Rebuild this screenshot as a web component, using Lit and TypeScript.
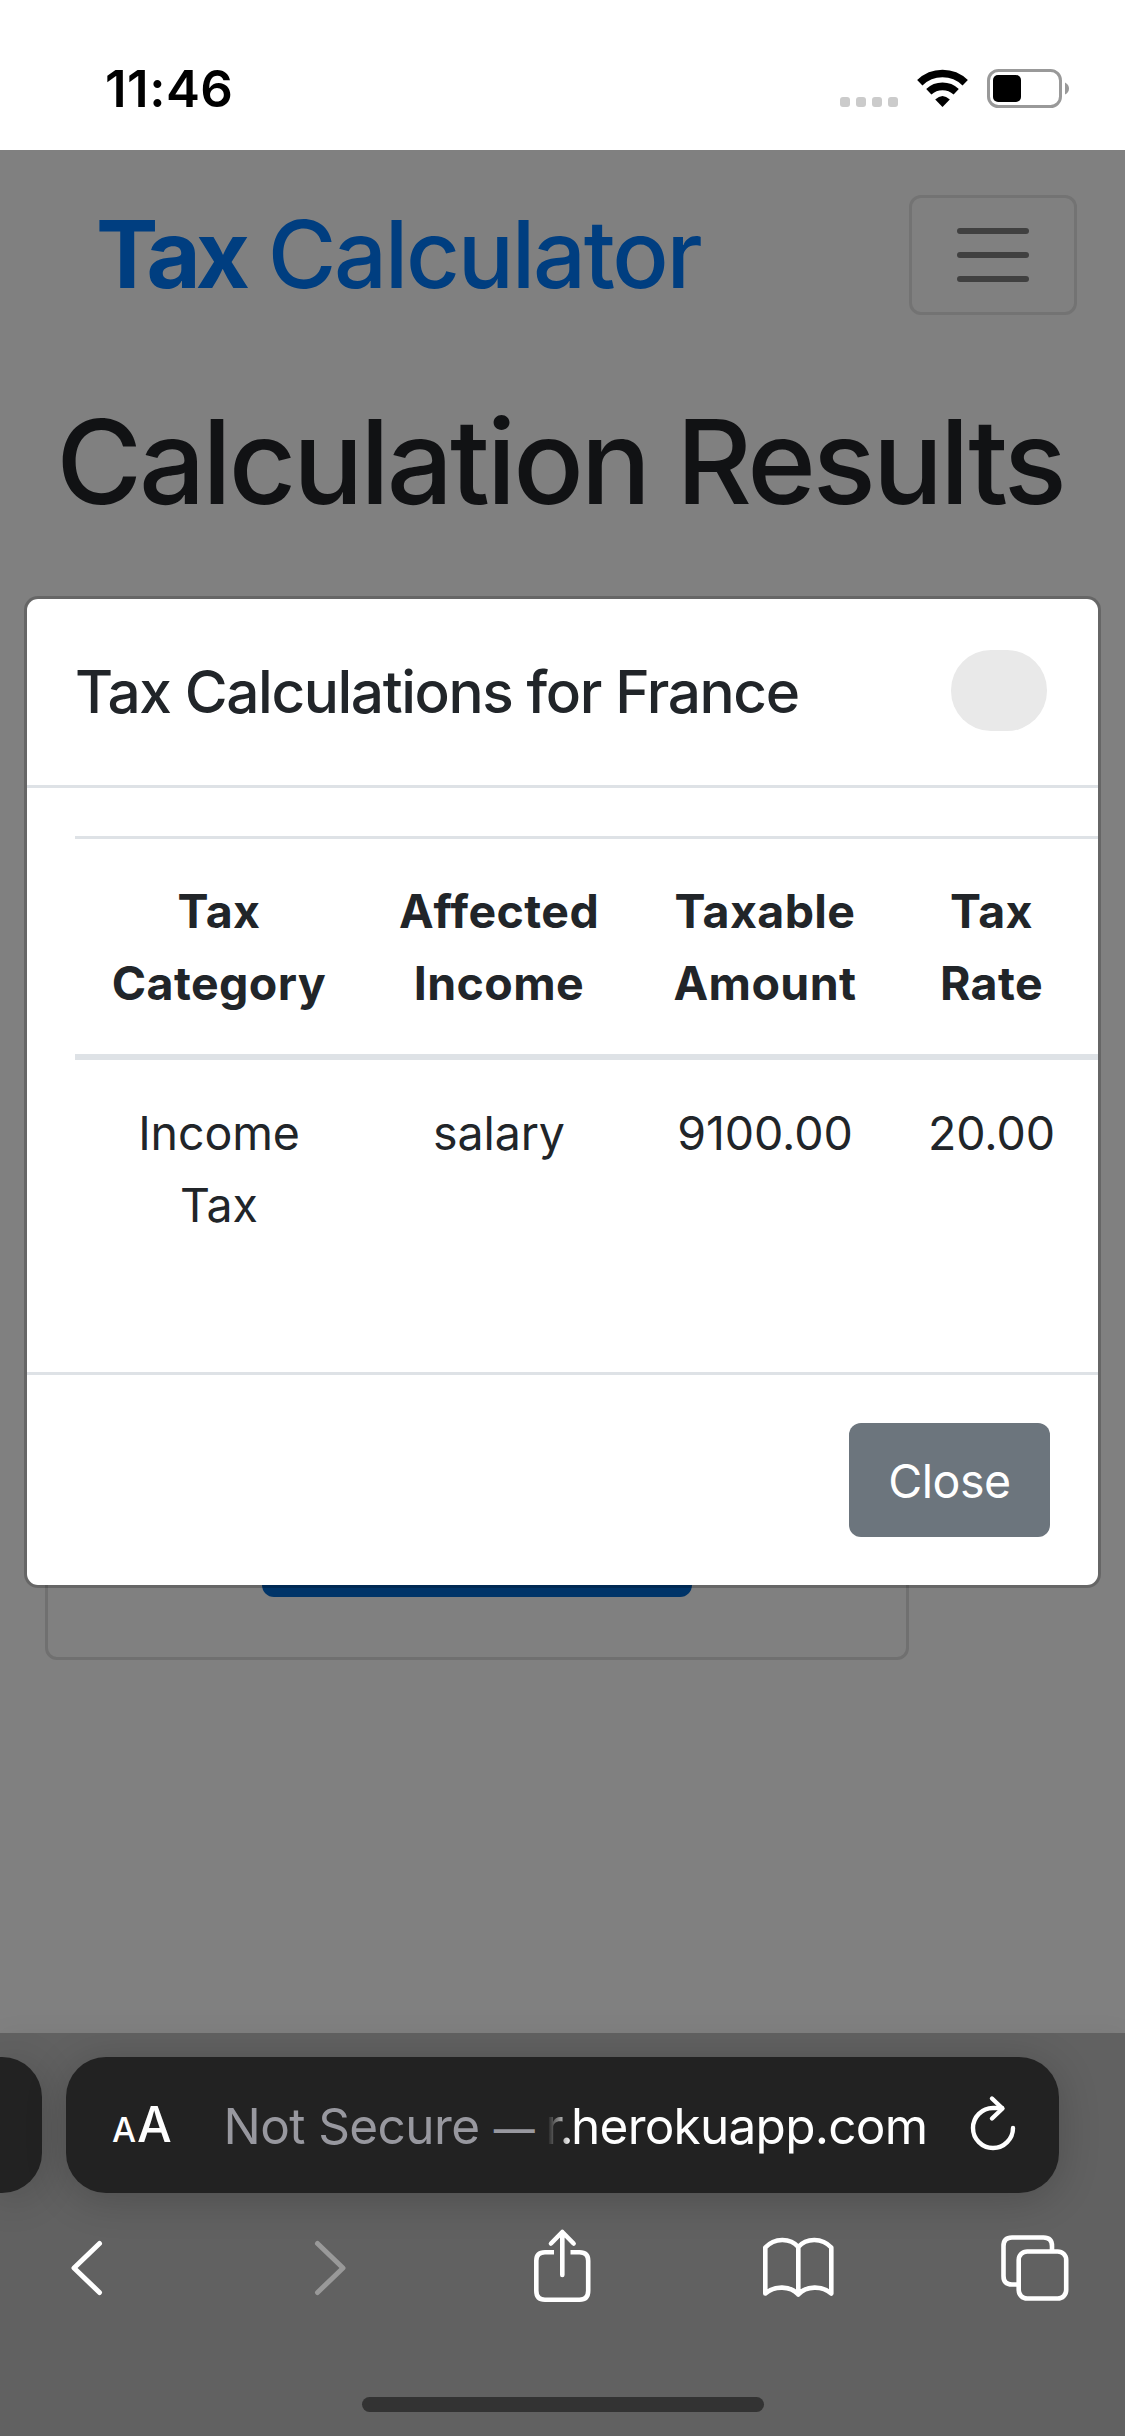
import { LitElement, html, css, svg } from "lit";
import { customElement } from "lit/decorators.js";

interface Column {
  heading: string[];
  value: string[];
}

const COLUMNS: Column[] = [
  { heading: ["Tax", "Category"], value: ["Income", "Tax"] },
  { heading: ["Affected", "Income"], value: ["salary"] },
  { heading: ["Taxable", "Amount"], value: ["9100.00"] },
  { heading: ["Tax", "Rate"], value: ["20.00"] },
];

const lines = (parts: string[]) => parts.map((p) => html`<span class="line">${p}</span>`);

@customElement("status-bar")
export class StatusBar extends LitElement {
  static styles = css`
    :host { display: flex; justify-content: space-between; height: 150px; box-sizing: border-box; background: #fff; color: #000; padding: 0 54px 0 105px; }
    .time { font-size: 51px; font-weight: 600; line-height: 60px; margin-top: 59px; letter-spacing: 0.5px; }
    .icons { display: block; width: 240px; height: 60px; margin-top: 60px; }
  `;
  render() {
    return html`
      <div class="time">11:46</div>
      <svg class="icons" viewBox="831 60 240 60">
        ${[840, 856, 872, 888].map((x) => svg`<rect x=${x} y="97" width="10" height="10" rx="3" fill="#cbcbcb"/>`)}
        <g fill="none" stroke="#000" stroke-width="7.6">
          <path d="M919.8 82.8a32.5 32.5 0 0 1 45.4 0"/>
          <path d="M928.8 91.8a20 20 0 0 1 27.4 0"/>
        </g>
        <path d="M935.2 99.6q7.3-7.2 14.6 0l-7.3 7.5z" fill="#000"/>
        <rect x="988.5" y="70.5" width="72" height="36" rx="10" fill="none" stroke="#999" stroke-width="3"/>
        <rect x="993" y="75" width="28" height="27" rx="5" fill="#000"/>
        <path d="M1065 82.5q4 2 4 6t-4 6z" fill="#999"/>
      </svg>
    `;
  }
}

@customElement("result-dialog")
export class ResultDialog extends LitElement {
  static styles = css`
    :host { display: block; box-sizing: border-box; width: 1077px; height: 992px; border: 3px solid rgba(0, 0, 0, 0.2); border-radius: 14px; background: #fff; background-clip: padding-box; color: #212529; overflow: hidden; }
    .header { display: flex; justify-content: space-between; box-sizing: border-box; height: 189px; padding: 51px 51px 0 48px; border-bottom: 3px solid #dee2e6; }
    .title { margin: -3px 0 0; font-size: 58.5px; font-weight: 500; line-height: 90px; letter-spacing: -1.4px; }
    .dismiss { width: 96px; height: 81px; border: 0; padding: 0; border-radius: 40px; background: #e9e9e9; }
    .body { box-sizing: border-box; height: 584px; padding: 48px 0 0 48px; }
    .row { display: grid; grid-template-columns: 288px 272px 260px 193px 1fr; text-align: center; font-size: 46.5px; line-height: 72px; }
    .head { box-sizing: border-box; height: 224px; padding-top: 36px; border-top: 3px solid #dee2e6; border-bottom: 6px solid #dee2e6; font-weight: 700; letter-spacing: 0.4px; }
    .data { padding-top: 37px; letter-spacing: -0.1px; }
    .line { display: block; }
    .footer { display: flex; justify-content: flex-end; box-sizing: border-box; height: 213px; padding: 48px 48px 0 0; border-top: 3px solid #dee2e6; }
    .close { width: 201px; height: 114px; border: 0; border-radius: 12px; background: #6c757d; color: #fff; font: inherit; font-size: 46.5px; line-height: 72px; letter-spacing: -0.5px; padding: 1px 0 0; }
  `;
  render() {
    return html`
      <div class="header">
        <h5 class="title">Tax Calculations for France</h5>
        <button class="dismiss"></button>
      </div>
      <div class="body">
        <div class="row head">${COLUMNS.map((c) => html`<div>${lines(c.heading)}</div>`)}</div>
        <div class="row data">${COLUMNS.map((c) => html`<div>${lines(c.value)}</div>`)}</div>
      </div>
      <div class="footer"><button class="close">Close</button></div>
    `;
  }
}

@customElement("browser-bar")
export class BrowserBar extends LitElement {
  static styles = css`
    :host { display: block; position: relative; height: 403px; box-sizing: border-box; padding-top: 24px; background: #616161; overflow: hidden; box-shadow: 0 0 24px rgba(0, 0, 0, 0.05); }
    .tabs { display: flex; gap: 24px; height: 136px; }
    .previous { width: 42px; border-radius: 0 40px 40px 0; background: #222; box-shadow: 0 6px 42px rgba(0, 0, 0, 0.2); }
    .address { display: flex; align-items: center; box-sizing: border-box; width: 993px; padding: 2px 42px 0 46px; border-radius: 40px; background: #222; box-shadow: 0 6px 42px rgba(0, 0, 0, 0.2); color: #fff; font-size: 49.5px; line-height: 60px; white-space: pre; }
    .sizes { display: flex; align-items: baseline; gap: 2px; width: 111.5px; padding-top: 3px; font-weight: 500; }
    .small { font-size: 34px; letter-spacing: -1px; }
    .large { font-size: 49px; }
    .state { width: 322.5px; color: #98989f; letter-spacing: -0.6px; }
    .dash { font-size: 41px; font-weight: 500; line-height: 1; margin-left: 1px; }
    .faded { width: 26px; margin-left: -1px; background: linear-gradient(90deg, #222 10%, #fff); background-clip: text; -webkit-background-clip: text; color: transparent; letter-spacing: -1px; }
    .host { flex: 1; letter-spacing: -0.75px; }
    .reload { display: block; width: 48px; height: 60px; }
    .tools { display: block; width: 1125px; height: 100px; margin-top: 27px; }
    .home { width: 402px; height: 15px; margin: 77px auto 0; border-radius: 8px; background: #333; }
  `;
  render() {
    return html`
      <div class="tabs">
        <div class="previous"></div>
        <div class="address">
          <div class="sizes"><span class="small">A</span><span class="large">A</span></div>
          <div class="state">Not Secure <span class="dash">—</span></div>
          <div class="faded">r.</div>
          <div class="host">herokuapp.com</div>
          <svg class="reload" viewBox="969 2096 48 60" fill="none" stroke="#fff" stroke-width="4.4" stroke-linecap="round" stroke-linejoin="round" overflow="visible">
            <path d="M1013 2128a20 20 0 1 1-20-20h9"/>
            <path d="M992 2098.500l10.500 10-10.500 10"/>
          </svg>
        </div>
      </div>
      <svg class="tools" viewBox="0 2220 1125 100" fill="none" stroke="#fff" stroke-width="4.6" stroke-linecap="round" stroke-linejoin="round">
        <path d="M99.500 2243.500 74 2268l25.500 24.500" stroke-width="5"/>
        <path d="M317.500 2243.500 343 2268l-25.500 24.500" stroke="#999" stroke-width="5"/>
        <path d="M554 2252.300h-9q-8.700 0-8.700 8.500v30q0 8.900 8.700 8.900h34.500q8.700 0 8.700-8.900v-30q0-8.500-8.700-8.500h-9" stroke-linecap="butt"/>
        <path d="M562.300 2275v-42M551 2243.500l11.300-11.500 11.300 11.500"/>
        <path d="M798.300 2294.500v-47.500c-8-9.500-24-9.500-33 .5v46c9-8 25-8 33 1 8-9 24-9 33-1v-46c-9-10-25-10-33-.5"/>
        <path d="M1017 2284.500h-5q-8.500 0-8.500-8.500v-30q0-8.500 8.500-8.500h31.500q8.500 0 8.500 8.500v4.500" stroke-linecap="butt"/>
        <rect x="1018.700" y="2251.500" width="47.500" height="47" rx="8.500"/>
      </svg>
      <div class="home"></div>
    `;
  }
}

@customElement("app-root")
export class AppRoot extends LitElement {
  static styles = css`
    :host { display: flex; flex-direction: column; width: 1125px; height: 2436px; overflow: hidden; font-family: Inter, Roboto, "Liberation Sans", sans-serif; }
    .page { position: relative; box-sizing: border-box; height: 1883px; background: #808080; }
    .navbar { display: flex; justify-content: space-between; padding: 45px 48px 0 96px; }
    .brand { margin-top: -1px; color: #003e80; font-size: 93.500px; font-weight: 500; line-height: 120px; height: 120px; letter-spacing: -2.3px; }
    .strong { font-weight: 700; letter-spacing: -5px; }
    .toggle { box-sizing: border-box; display: flex; flex-direction: column; justify-content: center; align-items: center; gap: 18px; width: 168px; height: 120px; border: 3px solid #737373; border-radius: 12px; }
    .stripe { width: 72px; height: 6px; border-radius: 3px; background: #404040; }
    .heading { margin: 75px 0 0; padding-right: 5px; color: #111214; font-size: 117px; font-weight: 500; line-height: 144px; letter-spacing: -3.1px; text-align: center; white-space: nowrap; }
    .card { display: flex; align-items: flex-end; justify-content: center; box-sizing: border-box; width: 864px; height: 900px; margin: 226px 0 0 45px; border: 3px solid #707070; border-radius: 12px; padding-bottom: 60px; }
    .submit { width: 430px; height: 114px; border-radius: 12px; background: #003468; }
    .overlay { position: absolute; left: 24px; top: 446px; }
  `;
  render() {
    return html`
      <status-bar></status-bar>
      <main class="page">
        <nav class="navbar">
          <div class="brand"><span class="strong">Tax</span> Calculator</div>
          <div class="toggle"><i class="stripe"></i><i class="stripe"></i><i class="stripe"></i></div>
        </nav>
        <h1 class="heading">Calculation Results</h1>
        <div class="card"><div class="submit"></div></div>
        <result-dialog class="overlay"></result-dialog>
      </main>
      <browser-bar></browser-bar>
    `;
  }
}
